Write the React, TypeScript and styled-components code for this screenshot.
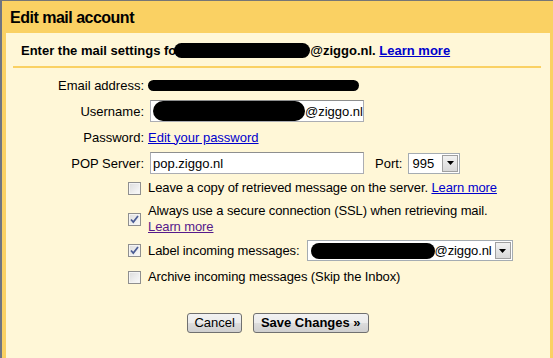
import React from 'react';
import styled, { createGlobalStyle } from 'styled-components';

const Global = createGlobalStyle`
  html, body { margin: 0; padding: 0; background: #fff7d7; }
  body { font-family: Arial, "Liberation Sans", sans-serif; font-size: 13px; color: #000; }
`;

const Frame = styled.div`
  height: 358px;
  box-sizing: border-box;
  border-top: 1px solid #767676;
  border-left: 2px solid #6e7482;
  background: #fad163;
  display: flex;
  flex-direction: column;
  padding: 1px 3px 0 4px;
`;

const Title = styled.div`
  height: 31px;
  padding-left: 4px;
  display: flex;
  align-items: center;
  font-size: 16px;
  font-weight: bold;
  letter-spacing: -0.5px;
`;

const Panel = styled.div`
  flex: 1;
  background: #fff7d7;
  display: flex;
  flex-direction: column;
`;

const Intro = styled.div`
  margin: 0 9px 0 7px;
  padding: 9px 0 7px 8px;
  border-bottom: 2px solid #fad163;
  font-weight: bold;
  line-height: 17px;
  display: flex;
  align-items: center;
`;

const Link = styled.a<{ $visited?: boolean }>`
  color: ${p => (p.$visited ? '#551a8b' : '#0000cc')};
  text-decoration: underline;
  cursor: pointer;
`;

const Blot = styled.span<{ $w: number; $h: number }>`
  display: inline-block;
  width: ${p => p.$w}px;
  height: ${p => p.$h}px;
  background: #000;
  border-radius: ${p => p.$h / 2}px;
  vertical-align: middle;
`;

const Form = styled.div`
  display: grid;
  grid-template-columns: 138px 1fr;
  grid-auto-rows: 26px;
  column-gap: 4px;
  margin-top: 4px;
`;

const Label = styled.div`
  text-align: right;
  align-self: center;
`;

const Value = styled.div`
  display: flex;
  align-items: center;
`;

const TextBox = styled.div<{ $w: number }>`
  width: ${p => p.$w}px;
  height: 22px;
  box-sizing: border-box;
  margin-left: 2px;
  border: 1px solid #abadb3;
  border-top-color: #8e8f8f;
  background: #fff;
  display: flex;
  align-items: center;
  padding-left: 2px;
  font-size: 13px;
`;

const PortLabel = styled.span`
  margin: 0 6px 0 11px;
`;

const Select = styled.div<{ $w: number }>`
  width: ${p => p.$w}px;
  height: 21px;
  box-sizing: border-box;
  border: 1px solid #a5acb2;
  background: #fff;
  display: flex;
  align-items: center;
  padding-left: 3px;
  justify-content: space-between;
`;

const SelectText = styled.span`
  display: flex;
  align-items: center;
`;

const DropButton = styled.span`
  width: 16px;
  height: 17px;
  margin-right: 1px;
  box-sizing: border-box;
  border: 1px solid #a0a0a0;
  background: linear-gradient(#f2f2f2, #d9d9d9);
  display: flex;
  align-items: center;
  justify-content: center;
`;

const Options = styled.div`
  display: flex;
  flex-direction: column;
  padding-left: 122px;
  margin-top: 4px;
  letter-spacing: -0.1px;
`;

const Option = styled.div<{ $mt: number }>`
  display: flex;
  align-items: center;
  margin-top: ${p => p.$mt}px;
  line-height: 16px;
`;

const Box = styled.span`
  width: 13px;
  height: 13px;
  box-sizing: border-box;
  flex: none;
  margin-right: 7px;
  border: 1px solid #8f8f8f;
  background: linear-gradient(135deg, #dcdcdc, #fbfbfb);
  box-shadow: inset 0 0 0 1px #f4f4f4;
  display: flex;
  align-items: center;
  justify-content: center;
`;

const Buttons = styled.div`
  display: flex;
  justify-content: center;
  gap: 11px;
  margin-top: 28px;
`;

const Button = styled.button<{ $bold?: boolean }>`
  height: 20px;
  box-sizing: border-box;
  padding: 0 ${p => (p.$bold ? 7 : 6)}px;
  border: 1px solid #707070;
  border-radius: 3px;
  background: linear-gradient(#f2f2f2 0%, #ebebeb 50%, #dddddd 51%, #cfcfcf 100%);
  font-family: Arial, "Liberation Sans", sans-serif;
  font-size: 13px;
  font-weight: ${p => (p.$bold ? 'bold' : 'normal')};
  color: #000;
  line-height: 16px;
`;

const Arrow = () => (
  <svg width="7" height="4" viewBox="0 0 7 4">
    <path d="M0 0h7L3.5 4z" fill="#000" />
  </svg>
);

const Check = ({ checked }: { checked?: boolean }) => (
  <Box>
    {checked && (
      <svg width="9" height="9" viewBox="0 0 9 9">
        <path d="M1 4.5l2.3 2.6L8 1" fill="none" stroke="#4a5c94" strokeWidth="1.7" />
      </svg>
    )}
  </Box>
);

export default function App() {
  return (
    <>
      <Global />
      <Frame>
        <Title>Edit mail account</Title>
        <Panel>
          <Intro>
            Enter the mail settings fo
            <Blot $w={136} $h={15} style={{ marginLeft: -2 }} />
            @ziggo.nl.&nbsp;<Link>Learn more</Link>
          </Intro>
          <Form>
            <Label>Email address:</Label>
            <Value>
              <Blot $w={211} $h={11} />
            </Value>
            <Label>Username:</Label>
            <Value>
              <TextBox $w={214}>
                <Blot $w={178} $h={20} />
                @ziggo.nl
              </TextBox>
            </Value>
            <Label>Password:</Label>
            <Value>
              <Link>Edit your password</Link>
            </Value>
            <Label>POP Server:</Label>
            <Value>
              <TextBox $w={214}>pop.ziggo.nl</TextBox>
              <PortLabel>Port:</PortLabel>
              <Select $w={52}>
                <SelectText>995</SelectText>
                <DropButton>
                  <Arrow />
                </DropButton>
              </Select>
            </Value>
          </Form>
          <Options>
            <Option $mt={0}>
              <Check />
              <span>
                Leave a copy of retrieved message on the server. <Link>Learn more</Link>
              </span>
            </Option>
            <Option $mt={7}>
              <Check checked />
              <span>
                Always use a secure connection (SSL) when retrieving mail.
                <br />
                <Link $visited>Learn more</Link>
              </span>
            </Option>
            <Option $mt={5}>
              <Check checked />
              <span>Label incoming messages:</span>
              <Select $w={206} style={{ marginLeft: 7 }}>
                <SelectText>
                  <Blot $w={124} $h={16} />
                  @ziggo.nl
                </SelectText>
                <DropButton>
                  <Arrow />
                </DropButton>
              </Select>
            </Option>
            <Option $mt={8}>
              <Check />
              <span>Archive incoming messages (Skip the Inbox)</span>
            </Option>
          </Options>
          <Buttons>
            <Button>Cancel</Button>
            <Button $bold>Save Changes »</Button>
          </Buttons>
        </Panel>
      </Frame>
    </>
  );
}
